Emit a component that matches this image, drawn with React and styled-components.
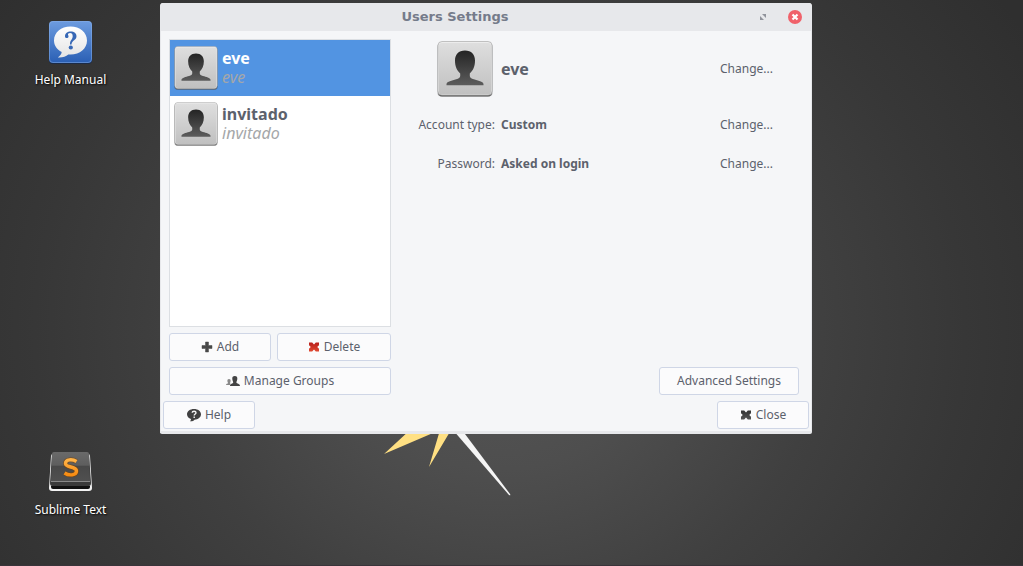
import React, { useState, useId } from "react";
import styled, { createGlobalStyle } from "styled-components";

const Global = createGlobalStyle`
  *, *::before, *::after { box-sizing: border-box; }
  body { margin: 0; background: #333; }
  body, button { font-family: "Noto Sans", "Open Sans", sans-serif; font-size: 12px; line-height: 16px; }
  h1, dl, dd, dt, ul { margin: 0; padding: 0; }
`;

const Desktop = styled.div`
  position: relative;
  display: flex;
  align-items: flex-start;
  min-height: 100vh;
  padding: 3px 211px 0 0;
  overflow: hidden;
  border-bottom: 1px solid #39343a;
  background: radial-gradient(ellipse 620px 560px at 500px 330px, #565656 0%, #4e4e4e 25%, #404040 52%, #373737 75%, #2f2f2f 100%);
`;

const Shortcuts = styled.nav`
  display: flex;
  flex: 0 0 160px;
  flex-direction: column;
  gap: 358px;
  padding: 17px 19px 0 0;
`;

const Shortcut = styled.a`
  display: flex;
  flex-direction: column;
  align-items: center;
  gap: 8px;
  height: 72px;
  color: #fff;
  text-decoration: none;
  text-shadow: 1px 1px 2px #000;
`;

const Star = styled.svg`
  position: absolute;
  left: 384px;
  top: 430px;
`;

const Window = styled.main`
  position: relative;
  flex: 1;
  min-width: 480px;
  overflow: hidden;
  border: solid #e7e8eb;
  border-width: 0 1px 3px;
  border-radius: 3px 3px 2px 2px;
  background: #f5f6f8;
  color: #5c616c;
`;

const TitleBar = styled.header`
  display: grid;
  grid-template-columns: 1fr 62px;
  align-items: center;
  height: 28px;
  padding-right: 0;
  background: #e7e8eb;
`;

const Title = styled.h1`
  color: #757b8a;
  font: bold 13px/16px "DejaVu Sans", sans-serif;
  text-align: center;
`;

const WindowControls = styled.div`
  display: flex;
  align-items: center;
  justify-content: flex-end;
  gap: 21px;
  padding-right: 9px;
`;

const PlainButton = styled.button`
  display: flex;
  padding: 0;
  border: 0;
  background: none;
  color: inherit;
`;

const Content = styled.div`
  display: flex;
  gap: 8px;
  padding: 8px 12px 6px 8px;
`;

const Sidebar = styled.section`
  display: flex;
  flex: 0 0 222px;
  flex-direction: column;
  gap: 6px;
`;

const UserList = styled.ul`
  min-height: 288px;
  border: 1px solid #dcdfe3;
  background: #fff;
  list-style: none;
`;

const UserButton = styled.button`
  display: flex;
  align-items: center;
  gap: 4px;
  width: 100%;
  height: 56px;
  padding: 0 4px;
  border: 0;
  background: ${(p) => (p.$selected ? "#5294e2" : "#fff")};
  color: ${(p) => (p.$selected ? "#fff" : "#5c616c")};
  text-align: left;
`;

const UserNames = styled.span`
  display: flex;
  flex-direction: column;
  font-size: 16px;
  line-height: 19px;
`;

const Login = styled.i`
  color: #a5a7a9;
`;

const ButtonRow = styled.div`
  display: flex;
  gap: 6px;
`;

const Button = styled.button`
  display: flex;
  flex: ${(p) => p.$flex || "none"};
  align-items: center;
  justify-content: center;
  gap: 4px;
  height: 28px;
  min-width: 92px;
  padding: 0 17px;
  border: 1px solid #cfd6e6;
  border-radius: 3px;
  background: #fbfbfc;
  color: #5c616c;
`;

const Details = styled.section`
  display: flex;
  flex: 1;
  flex-direction: column;
  align-items: flex-end;
  justify-content: space-between;
`;

const Properties = styled.dl`
  width: 100%;
`;

const Property = styled.div`
  display: grid;
  grid-template-columns: 96px 1fr 79px;
  align-items: center;
  column-gap: 6px;
  height: ${(p) => (p.$tall ? "60px" : "39px")};
  margin-bottom: ${(p) => (p.$tall ? "6px" : "0")};
`;

const Term = styled.dt`
  justify-self: end;
  padding-right: ${(p) => (p.$picture ? "2px" : "0")};
`;

const Value = styled.dd`
  font-size: ${(p) => (p.$large ? "16px" : "12px")};
  font-weight: bold;
`;

const Footer = styled.footer`
  display: flex;
  justify-content: space-between;
  padding: 0 2px 2px;
`;

function Avatar({ size }) {
  const id = useId();
  return (
    <svg width={size} height={size} viewBox="0 0 56 56" aria-hidden="true">
      <defs>
        <linearGradient id={id + "a"} x2="0" y2="1">
          <stop stopColor="#dedede" />
          <stop offset="1" stopColor="#c0c0c0" />
        </linearGradient>
        <linearGradient id={id + "b"} x2="0" y2="1">
          <stop stopColor="#242424" />
          <stop offset="1" stopColor="#5c5c5c" />
        </linearGradient>
      </defs>
      <rect x="0" y="1" width="56" height="55" rx="5" fill="#000" opacity=".18" />
      <rect x="1" y="2" width="54" height="53.5" rx="4" fill="#666" />
      <rect x="1" y="0.500" width="54" height="53.500" rx="4" fill="#ececec" stroke="#aaa" strokeWidth=".7" />
      <rect x="2" y="2" width="52" height="51.500" rx="3" fill={`url(#${id}a)`} />
      <path d="M28 9.500c-6.500 0-10 4-10 10 0 6 2 10 5.200 13v2.500c0 1.500-1.500 2.500-4 3.300C15 39.600 10 40.500 9.500 43v1.200h37V43c-.5-2.500-5.500-3.400-9.700-4.700-2.500-.8-4-1.800-4-3.300v-2.500c3.200-3 5.200-7 5.200-13 0-6-3.500-10-10-10z" fill={`url(#${id}b)`} />
    </svg>
  );
}

const HelpManualIcon = () => (
  <svg width="44" height="44" viewBox="0 0 44 44" aria-hidden="true">
    <defs>
      <linearGradient id="manual" x2="0" y2="1">
        <stop stopColor="#6d9ce0" />
        <stop offset="1" stopColor="#2a5fb4" />
      </linearGradient>
      <linearGradient id="bubble" x2="0" y2="1">
        <stop stopColor="#fff" />
        <stop offset="1" stopColor="#e4e4e4" />
      </linearGradient>
    </defs>
    <rect x="0" y="2" width="43" height="42" rx="4" fill="#1b2b47" />
    <rect x="0" y="1" width="43" height="42" rx="4" fill="url(#manual)" />
    <rect x="0.500" y="1.500" width="42" height="41" rx="3.500" fill="none" stroke="#8ab0e8" opacity=".5" />
    <path d="M21.500 6.500c9.500 0 16.500 6 16.500 14s-7 14-16.500 14c-.8 0-1.500 0-2.200-.1-2.500 2-6 3.400-10.500 3 2.200-1.300 3.600-3 3.900-5.400C7.700 29.400 5 25.400 5 20.500c0-8 7-14 16.500-14z" fill="url(#bubble)" />
    <path d="M16 16.500c0-3.500 2.500-5 5.700-5 3.500 0 5.800 1.800 5.800 4.800 0 4-4.700 4-5 8.200H21c-.2-4.500 2.700-5 2.700-8.300 0-2-.9-3.200-2.700-3.200-1.400 0-2.200.7-2 1.800.3.800.6 1.100.5 2-.2 1.800-3.500 1.600-3.500-.3z" fill="#3768b6" />
    <circle cx="21.800" cy="27.500" r="2.100" fill="#3768b6" />
  </svg>
);

const SublimeIcon = () => (
  <svg width="44" height="44" viewBox="0 0 44 44" aria-hidden="true">
    <defs>
      <linearGradient id="key" x2="0" y2="1">
        <stop stopColor="#6a6a6a" />
        <stop offset=".45" stopColor="#5e5e5e" />
        <stop offset=".5" stopColor="#484848" />
        <stop offset="1" stopColor="#505050" />
      </linearGradient>
      <linearGradient id="ess" x2="0" y2="1">
        <stop stopColor="#ffb347" />
        <stop offset="1" stopColor="#f78c12" />
      </linearGradient>
    </defs>
    <path d="M2 6q0-2 2-2h35q2 0 2 2l2 32q0 3-3 3H3q-3 0-3-3z" fill="#f2f2f2" />
    <path d="M2 36h39v1q0 2-2 2H4q-2 0-2-2z" fill="#111" />
    <path d="M3 4q0-2 2-2h33q2 0 2 2l2 29q0 3-2 3H3q-2 0-2-3z" fill="#3a3a3a" />
    <path d="M3 4q0-2 2-2h33q2 0 2 2l1 27H2z" fill="url(#key)" />
    <path d="M2 31.500h39" stroke="#888" />
    <path d="M27.500 11.500c-4-2.500-11-2.500-11 2 0 4.500 11 2.500 11 7.500 0 4.500-7.500 5-12 2" fill="none" stroke="#7a4308" strokeWidth="5" opacity=".6" />
    <path d="M27.500 11.500c-4-2.500-11-2.500-11 2 0 4.500 11 2.500 11 7.500 0 4.500-7.500 5-12 2" fill="none" stroke="url(#ess)" strokeWidth="3.400" />
  </svg>
);

const PlusIcon = () => (
  <svg width="12" height="12" viewBox="0 0 12 12" aria-hidden="true">
    <path d="M4.500 1h3v3.500H11v3H7.500V11h-3V7.500H1v-3h3.500z" fill="#484848" stroke="#484848" strokeWidth=".5" />
  </svg>
);

const CrossIcon = ({ top, bottom }) => {
  const id = useId();
  return (
    <svg width="12" height="12" viewBox="0 0 12 12" aria-hidden="true">
      <defs>
        <linearGradient id={id} x2="0" y2="1">
          <stop stopColor={top} />
          <stop offset="1" stopColor={bottom} />
        </linearGradient>
      </defs>
      <path d="M1 1.500h3.200L6 3.500l1.800-2H11v2.700L9.200 6 11 7.800v2.700H7.800L6 8.500l-1.800 2H1V7.800L2.800 6 1 4.200z" fill={`url(#${id})`} />
    </svg>
  );
};

const GroupIcon = () => (
  <svg width="14" height="12" viewBox="0 0 14 12" aria-hidden="true">
    <path d="M3 4c1.300 0 1.800.9 1.600 2C4.500 7 4 7.500 4.300 8.500V10H0c0-1.500 2-1 2-1.900.1-.7-.6-1.200-.6-2.200S1.700 4 3 4z" fill="#888" />
    <path d="M8.800 1c1.900 0 2.700 1.300 2.500 3-.1 1.700-.9 2.200-.9 3.500C10.700 8.800 14 8.500 14 11H4c0-2.500 3-2.200 3.200-3.500 0-1.300-.8-1.800-.9-3.500C6.100 2.300 6.900 1 8.800 1z" fill="#444" />
  </svg>
);

const HelpIcon = () => (
  <svg width="14" height="14" viewBox="0 0 14 14" aria-hidden="true">
    <path d="M7 1c4 0 7 2.200 7 5.300s-3 5.400-6.500 5.400C6.500 13 4.700 13.500 3 13.200c.7-.6 1-1.300 1-2.100C1.600 10.300 0 8.500 0 6.300 0 3.200 3 1 7 1z" fill="#404040" />
    <path d="M5.200 4.800c0-2 3.800-2 3.800 0C9 6 7.200 6 7.200 7.600M7.200 8.500V10" fill="none" stroke="#f2f2f2" strokeWidth="1.400" />
  </svg>
);

const users = ["eve", "invitado"];

export default function App() {
  const [selected, setSelected] = useState("eve");
  return (
    <Desktop>
      <Global />
      <Star width="130" height="68" viewBox="0 0 130 68" aria-hidden="true">
        <path d="M0 24L26 0H56zM45 37L56 0H67z" fill="#ffe083" />
        <path d="M69 0h9l48 64q1 2-1 1z" fill="#f5f5f5" />
      </Star>
      <Shortcuts aria-label="Desktop">
        <Shortcut href="#help-manual"><HelpManualIcon />Help Manual</Shortcut>
        <Shortcut href="#sublime-text"><SublimeIcon />Sublime Text</Shortcut>
      </Shortcuts>
      <Window>
        <TitleBar>
          <Title>Users Settings</Title>
          <WindowControls>
            <PlainButton aria-label="Maximize">
              <svg width="8" height="8" viewBox="0 0 8 8"><path d="M3 1h4v4zM1 3v4h4z" fill="#90939b" /></svg>
            </PlainButton>
            <PlainButton aria-label="Close window">
              <svg width="14" height="14" viewBox="0 0 14 14">
                <circle cx="7" cy="7" r="7" fill="#f0616a" />
                <path d="M4.500 4.500l5 5M9.500 4.500l-5 5" stroke="#fff" strokeWidth="2.200" />
              </svg>
            </PlainButton>
          </WindowControls>
        </TitleBar>
        <Content>
          <Sidebar>
            <UserList>
              {users.map((user) => (
                <li key={user}>
                  <UserButton $selected={user === selected} aria-pressed={user === selected} onClick={() => setSelected(user)}>
                    <Avatar size={44} />
                    <UserNames>
                      <b>{user}</b>
                      <Login>{user}</Login>
                    </UserNames>
                  </UserButton>
                </li>
              ))}
            </UserList>
            <ButtonRow>
              <Button $flex="0 0 102px"><PlusIcon />Add</Button>
              <Button $flex="1"><CrossIcon top="#b81f1b" bottom="#e04a32" />Delete</Button>
            </ButtonRow>
            <Button><GroupIcon />Manage Groups</Button>
          </Sidebar>
          <Details>
            <Properties>
              <Property $tall>
                <Term $picture><PlainButton aria-label="Change picture"><Avatar size={56} /></PlainButton></Term>
                <Value $large>{selected}</Value>
                <PlainButton>Change...</PlainButton>
              </Property>
              <Property>
                <Term>Account type:</Term>
                <Value>Custom</Value>
                <PlainButton>Change...</PlainButton>
              </Property>
              <Property>
                <Term>Password:</Term>
                <Value>Asked on login</Value>
                <PlainButton>Change...</PlainButton>
              </Property>
            </Properties>
            <Button>Advanced Settings</Button>
          </Details>
        </Content>
        <Footer>
          <Button><HelpIcon />Help</Button>
          <Button><CrossIcon top="#333" bottom="#555" />Close</Button>
        </Footer>
      </Window>
    </Desktop>
  );
}
